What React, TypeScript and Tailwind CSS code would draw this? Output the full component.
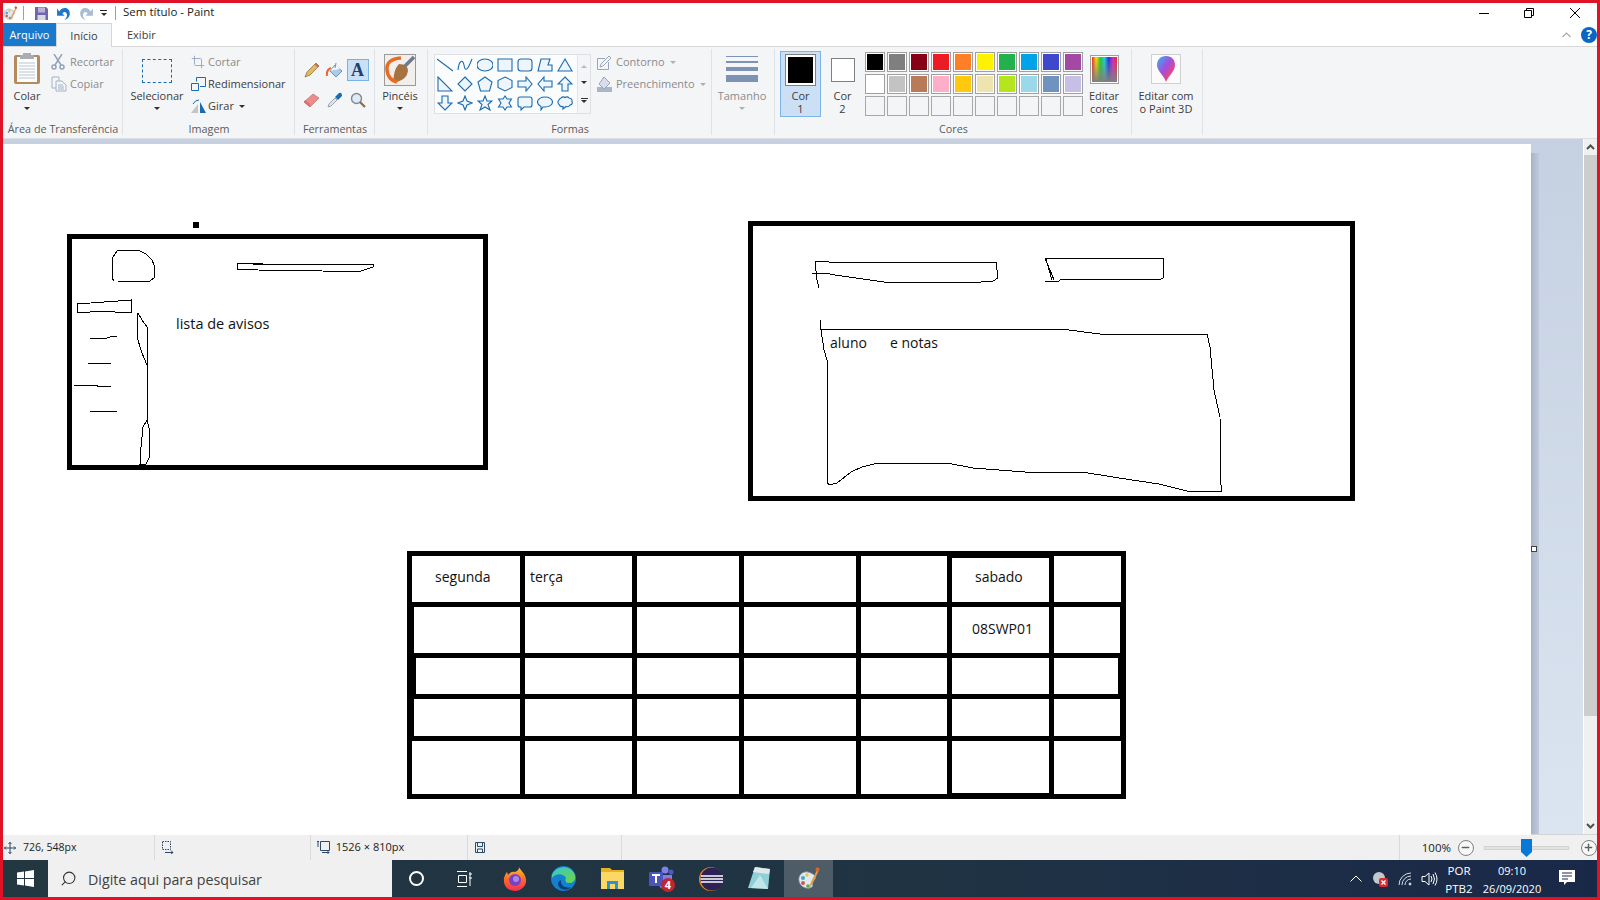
import { Crop, Minus, Plus, Search } from "lucide-react"
import type { ReactNode } from "react"

const row1 = ["#000000", "#7f7f7f", "#880015", "#ed1c24", "#ff7f27", "#fff200", "#22b14c", "#00a2e8", "#3f48cc", "#a349a4"]
const row2 = ["#ffffff", "#c3c3c3", "#b97a57", "#ffaec9", "#ffc90e", "#efe4b0", "#b5e61d", "#99d9ea", "#7092be", "#c8bfe7"]

const shapes = [
    "M0 2 L16 14",
    "M1 13 C2 3 6 2 7 8 S10 15 15 2",
    "M8 2 C13 2 16 5 16 8 S13 14 8 14 S0 11 0 8 S3 2 8 2Z",
    "M1 2 H15 V14 H1Z",
    "M4 2 H12 Q15 2 15 5 V11 Q15 14 12 14 H4 Q1 14 1 11 V5 Q1 2 4 2Z",
    "M1 14 L4 2 H13 L11 8 H15 V14Z",
    "M8 2 L15 14 H1Z",
    "M1 1 V15 H15Z",
    "M8 1 L15 8 L8 15 L1 8Z",
    "M8 1 L15 6 L12.5 15 H3.5 L1 6Z",
    "M8 1 L15 4.5 V11.5 L8 15 L1 11.5 V4.5Z",
    "M1 5 H9 V1 L15 8 L9 15 V11 H1Z",
    "M15 5 H7 V1 L1 8 L7 15 V11 H15Z",
    "M8 1 L15 8 H11 V15 H5 V8 H1Z",
    "M8 15 L15 8 H11 V1 H5 V8 H1Z",
    "M8 1 L10 6 L15 8 L10 10 L8 15 L6 10 L1 8 L6 6Z",
    "M8 1 L10 6 H15 L11 9.5 L13 15 L8 12 L3 15 L5 9.5 L1 6 H6Z",
    "M8 1 L10 4 H14.5 L12 8 L14.5 12 H10 L8 15 L6 12 H1.5 L4 8 L1.5 4 H6Z",
    "M3 2 H13 Q15 2 15 4 V10 Q15 12 13 12 H7 L4 15 V12 H3 Q1 12 1 10 V4 Q1 2 3 2Z",
    "M8 2 C12 2 15.5 4 15.5 7 S12 12 8 12 L6 12 L4 15 L4 11.5 C2 10.5 .5 9 .5 7 C.5 4 4 2 8 2Z",
    "M4 3 Q6 1 8 2.5 Q10.5 1 12 3 Q15.5 3.5 15 6.5 Q16 9.5 13 10 Q11.5 12.5 9 11.5 L6 14 L6 11.5 Q3 12 2.500 10 Q0 8 1.500 5.500 Q2.500 3.500 4 3Z",
]

const tableRows = [
    [
        { text: "segunda", className: "pl-[23px] pb-[5px]" },
        { text: "terça", className: "pl-[5px] pb-[5px]" },
        {}, {}, {},
        { text: "sabado", className: "pl-[23px] pb-[7px] mt-[2px]" },
        {},
    ],
    [{ className: "ml-[2px]" }, {}, {}, {}, {}, { text: "08SWP01", className: "pl-[20px] pb-[3px]" }, { className: "mr-[1px]" }],
    [{ className: "ml-[4px]" }, {}, {}, {}, {}, {}, { className: "mr-[3px]" }],
    [{ className: "ml-[2px]" }, {}, {}, {}, {}, {}, { className: "mr-[1px]" }],
    [{}, {}, {}, {}, {}, { className: "mb-[1px]" }, {}],
] as { text?: string; className?: string }[][]

function Caret({ gray }: { gray?: boolean }) {
    return <span className={`inline-block w-0 h-0 border-x-[3px] border-x-transparent border-t-[3px] ${gray ? "border-t-[#b0b0b0]" : "border-t-[#303030]"}`} />
}

function Group({ w, label, children }: { w: string; label: string; children: ReactNode }) {
    return (
        <div className={`${w} shrink-0 flex flex-col relative`}>
            <div className="h-[73px] flex">{children}</div>
            <div className="h-[18px] flex items-center justify-center text-[10.8px] text-[#5c5c5c] whitespace-nowrap">{label}</div>
            <div className="absolute right-0 top-[2px] bottom-[3px] w-px bg-[#dfe2e6]" />
        </div>
    )
}

function BigButton({ w, icon, lines, caret, gray }: { w: string; icon: ReactNode; lines: string[]; caret?: boolean; gray?: boolean }) {
    return (
        <div className={`${w} shrink-0 flex flex-col items-center`}>
            <div className="h-[42px] flex items-center justify-center">{icon}</div>
            <div className={`text-[11px] leading-[13px] text-center whitespace-nowrap ${gray ? "text-[#8b8b8b]" : "text-[#3c3c3c]"}`}>
                {lines.map((l) => <div key={l}>{l}</div>)}
            </div>
            {caret && <div className="h-[12px] flex items-center"><Caret gray={gray} /></div>}
        </div>
    )
}

function SmallRow({ box, icon, text, gray, caret }: { box: string; icon: ReactNode; text: string; gray?: boolean; caret?: "dark" | "gray" }) {
    return (
        <div className={`h-[22px] flex items-center text-[11px] whitespace-nowrap ${gray ? "text-[#8b8b8b]" : "text-[#3c3c3c]"}`}>
            <div className={`${box} shrink-0 flex items-center`}>{icon}</div>
            {text}
            {caret && <span className="ml-[5px] flex"><Caret gray={caret === "gray"} /></span>}
        </div>
    )
}

function PaintIcon({ size }: { size: number }) {
    return (
        <svg width={size} height={size} viewBox="0 0 24 24">
            <path d="M11 5 C5 4 1 9 2 14 C3 20 10 23 15 20 C17 18 14 16 16 14 C19 12 21 8 11 5Z" fill="#dfe9ee" stroke="#7b95a3" strokeWidth=".8" />
            <circle cx="6" cy="11" r="2" fill="#4f9fd8" />
            <circle cx="10" cy="8" r="1.7" fill="#f0c330" />
            <circle cx="6" cy="16" r="2" fill="#d9534f" />
            <circle cx="11" cy="19" r="1.8" fill="#5aa84f" />
            <path d="M21 1 L14 15 L11 23 L16 16 L22 3Z" fill="#e49a4a" />
            <path d="M20 0 L23 2 L21 5 L18 3Z" fill="#d8632c" />
        </svg>
    )
}

function Shape({ d }: { d: string }) {
    return (
        <svg width="16" height="16" viewBox="0 0 16 16">
            <path d={d} fill={d.startsWith("M0 2") || d.startsWith("M1 13") ? "none" : "#eef5fb"} stroke="#1b6bb0" strokeWidth="1.1" />
        </svg>
    )
}

function TitleBar() {
    return (
        <div className="h-[20px] bg-white flex items-center text-[11.5px] text-[#222]">
            <div className="w-[15px]"><PaintIcon size={15} /></div>
            <div className="ml-[5px] w-px h-[14px] bg-[#a0a0a0]" />
            <svg className="ml-[10px]" width="15" height="15" viewBox="0 0 15 15">
                <path d="M1 1 H12 L14 3 V14 H1Z" fill="#6f66ad" />
                <rect x="4" y="1.5" width="7" height="5" fill="#b9b4d8" />
                <rect x="3.5" y="9" width="8" height="5" fill="#d8d8e0" />
            </svg>
            <svg className="ml-[7px]" width="16" height="16" viewBox="0 0 15 15">
                <path d="M3 6 C6 1 13 2 13 8 C13 11 11 13 8 14 C10 12 11 10 10 8 C9 6 7 6 6 8 L8 10 H1 V3Z" fill="#1e78c8" />
            </svg>
            <svg className="ml-[6px]" width="16" height="16" viewBox="0 0 15 15">
                <path d="M12 6 C9 1 2 2 2 8 C2 11 4 13 7 14 C5 12 4 10 5 8 C6 6 8 6 9 8 L7 10 H14 V3Z" fill="#a9bcd3" />
            </svg>
            <div className="ml-[6px] flex flex-col items-center gap-[2px]">
                <div className="w-[7px] h-px bg-[#222]" />
                <Caret />
            </div>
            <div className="ml-[8px] w-px h-[14px] bg-[#a0a0a0]" />
            <span className="ml-[7px] mb-[2px]">Sem título - Paint</span>
            <div className="ml-auto flex items-center">
                <div className="w-[10px] h-px bg-black" />
                <svg className="ml-[35px]" width="10" height="10" viewBox="0 0 10 10" fill="none" stroke="#000">
                    <path d="M.5 2.5 H7.5 V9.5 H.5Z M2.5 2.5 V.5 H9.5 V7.5 H7.5" />
                </svg>
                <svg className="ml-[36px] mr-[17px]" width="10" height="10" viewBox="0 0 10 10" stroke="#000">
                    <path d="M0 0 L10 10 M10 0 L0 10" />
                </svg>
            </div>
        </div>
    )
}

function Tabs() {
    return (
        <div className="h-[24px] bg-white flex border-b border-[#d6d6d6] text-[11px]">
            <div className="w-[53px] pt-px bg-[#1979ca] text-white flex items-center justify-center">Arquivo</div>
            <div className="w-[56px] h-[24px] pt-px bg-[#f5f6f7] border-x border-t border-[#d6d6d6] flex items-center justify-center text-[#3c3c3c]">Início</div>
            <span className="ml-[15px] pt-px self-center text-[#3c3c3c]">Exibir</span>
            <div className="ml-auto flex items-center">
                <svg width="9" height="6" viewBox="0 0 9 6" fill="none" stroke="#a8a8a8" strokeWidth="1.2"><path d="M.5 5 L4.5 1 L8.5 5" /></svg>
                <div className="ml-[10px] w-[16px] h-[16px] rounded-full bg-[#0b66c3] text-white text-[12px] font-bold flex items-center justify-center">?</div>
            </div>
        </div>
    )
}

function Ribbon() {
    return (
        <div className="h-[92px] bg-[#f4f5f7] border-b border-[#dcdfe4] flex">
            <Group w="w-[120px]" label="Área de Transferência">
                <BigButton
                    w="w-[48px]"
                    caret
                    lines={["Colar"]}
                    icon={
                        <svg width="26" height="32" viewBox="0 0 26 32">
                            <rect x="0" y="3" width="26" height="29" rx="2" fill="#b58a5c" />
                            <rect x="3" y="5" width="20" height="25" fill="#fdfdfd" />
                            <path d="M5 11 H21 M5 14 H21 M5 17 H21 M5 20 H21 M5 23 H21 M5 26 H21" stroke="#b9c5d4" />
                            <path d="M9 1 H17 V3 H20 V7 H6 V3 H9Z" fill="#a9adb3" />
                        </svg>
                    }
                />
                <div className="pt-[4px]">
                    <SmallRow box="w-[19px]" gray text="Recortar" icon={
                        <svg width="14" height="16" viewBox="0 0 14 16" fill="none" stroke="#92a2bb" strokeWidth="1.5">
                            <path d="M3 0 L10 11 M11 0 L4 11" /><circle cx="3" cy="13" r="2" /><circle cx="11" cy="13" r="2" />
                        </svg>
                    } />
                    <SmallRow box="w-[19px]" gray text="Copiar" icon={
                        <svg width="16" height="16" viewBox="0 0 16 16" fill="#f4f5f7" stroke="#a5b2c6">
                            <path d="M1 1 H8 V12 H1Z" /><path d="M5 5 H11 L15 9 V15 H5Z" /><path d="M7 9 H12 M7 11 H13 M7 13 H13" />
                        </svg>
                    } />
                </div>
            </Group>
            <Group w="w-[172px]" label="Imagem">
                <BigButton
                    w="w-[68px]"
                    caret
                    lines={["Selecionar"]}
                    icon={<div className="w-[30px] h-[24px] mt-[6px] border border-dashed border-[#1b6bb0]" />}
                />
                <div className="pt-[4px]">
                    <SmallRow box="w-[17px]" gray text="Cortar" icon={<Crop size={14} color="#92a2bb" strokeWidth={1.5} />} />
                    <SmallRow box="w-[17px]" text="Redimensionar" icon={
                        <svg width="15" height="14" viewBox="0 0 15 14" fill="none" stroke="#1b6bb0">
                            <path d="M5.5 4.5 V.5 H14.5 V9.5 H9" /><path d="M.5 6.5 H7.5 V13.5 H.5Z" />
                        </svg>
                    } />
                    <SmallRow box="w-[17px]" caret="dark" text="Girar" icon={
                        <svg width="15" height="15" viewBox="0 0 15 15">
                            <path d="M7 5 V14 H0Z" fill="#c2c6cc" /><path d="M9 3 V14 H15Z" fill="#1b6bb0" /><path d="M2 5 Q4 1 8 1" fill="none" stroke="#1b6bb0" />
                        </svg>
                    } />
                </div>
            </Group>
            <Group w="w-[80px]" label="Ferramentas">
                <div className="pl-[5px] pt-[8px] grid grid-cols-[23px_23px_23px] grid-rows-[30px_30px]">
                    <div className="flex items-center justify-center">
                        <svg width="16" height="16" viewBox="0 0 16 16"><path d="M1 15 L3 10 L12 1 L15 4 L6 13Z" fill="#e5b95c" stroke="#7d6a3c" strokeWidth=".7" /><path d="M12 1 L15 4 L13.5 5.5 L10.5 2.5Z" fill="#d9695f" /></svg>
                    </div>
                    <div className="flex items-center justify-center">
                        <svg width="17" height="17" viewBox="0 0 17 17">
                            <path d="M9 3 L16 9 L10 15 L4 9Z" fill="#a8cdea" stroke="#6e8fb0" />
                            <path d="M4 9 L10 3 L14 7 L8 8Z" fill="#f4f8fb" />
                            <path d="M10 1 L9 6" stroke="#6e8fb0" />
                            <path d="M5 6 Q0 8 1 14" fill="none" stroke="#e8662a" strokeWidth="2" />
                        </svg>
                    </div>
                    <div className="flex items-center justify-center">
                        <div className="w-[22px] h-[22px] bg-[#c9e0f7] border border-[#7ab2e8] flex items-center justify-center text-[18px] font-bold text-[#1f3f6e] [font-family:'Liberation_Serif',serif]">A</div>
                    </div>
                    <div className="flex items-center justify-center">
                        <svg width="17" height="15" viewBox="0 0 17 15"><path d="M1 9 L10 1 L16 5 L7 14Z" fill="#ec8d8d" stroke="#c56a6a" strokeWidth=".7" /><path d="M1 9 L7 14 L7 11 L2 7Z" fill="#d86d6d" /></svg>
                    </div>
                    <div className="flex items-center justify-center">
                        <svg width="16" height="16" viewBox="0 0 16 16"><path d="M1 15 L2 12 L8 6 L10 8 L4 14Z" fill="#dfe7ee" stroke="#7b8794" strokeWidth=".7" /><path d="M8 5 L12 1 Q15 0 15 4 L11 8Z" fill="#1b6bb0" /></svg>
                    </div>
                    <div className="flex items-center justify-center">
                        <svg width="16" height="16" viewBox="0 0 16 16"><circle cx="6.5" cy="6.5" r="5" fill="#dfeaf4" stroke="#7e8a96" strokeWidth="1.4" /><path d="M10 10 L15 15" stroke="#8c6b45" strokeWidth="2.2" /></svg>
                    </div>
                </div>
            </Group>
            <Group w="w-[53px]" label="">
                <BigButton
                    w="w-[50px]"
                    caret
                    lines={["Pincéis"]}
                    icon={
                        <svg className="mt-[4px]" width="32" height="32" viewBox="0 0 32 32">
                            <rect x=".5" y=".5" width="31" height="31" fill="#f1efec" stroke="#9a9a9a" />
                            <path d="M30 3 L19 14" stroke="#6d7c8c" strokeWidth="3.5" />
                            <path d="M15 10 Q24 10 24 17 Q23 25 13 28 Q8 28 10 21 Q11 14 15 10Z" fill="#a6723f" />
                            <path d="M17 4 Q2 5 3 16 Q4 26 13 28" fill="none" stroke="#ea6a1f" strokeWidth="3.5" />
                        </svg>
                    }
                />
            </Group>
            <Group w="w-[284px]" label="Formas">
                <div className="ml-[6px] mt-[7px] h-[60px] w-[157px] flex border border-[#dcdfe3]">
                    <div className="w-[142px] pr-[2px] bg-[#fbfcfd] grid grid-cols-7 grid-rows-3 place-items-center">
                        {shapes.map((d) => <Shape key={d} d={d} />)}
                    </div>
                    <div className="flex-1 border-l border-[#e2e4e8] flex flex-col items-center justify-around py-[3px]">
                        <span className="w-0 h-0 border-x-[3px] border-x-transparent border-b-[3px] border-b-[#b5bcc6]" />
                        <Caret />
                        <div className="flex flex-col items-center gap-[1px]"><div className="w-[7px] h-px bg-[#303030]" /><Caret /></div>
                    </div>
                </div>
                <div className="pl-[6px] pt-[4px]">
                    <SmallRow box="w-[19px]" gray caret="gray" text="Contorno" icon={
                        <svg width="15" height="15" viewBox="0 0 15 15" fill="none" stroke="#9aa7bb"><path d="M.5 3.5 H8 M.5 3.5 V14.5 H11.5 V7" /><path d="M3 12 L4 9 L12 1 L14 3 L6 11Z" fill="#f4f5f7" /></svg>
                    } />
                    <SmallRow box="w-[19px]" gray caret="gray" text="Preenchimento" icon={
                        <svg width="15" height="16" viewBox="0 0 15 16"><rect x="0" y="11" width="15" height="5" fill="#a9b6c8" /><path d="M7 1 L13 7 L7 13 L2 8Z" fill="#d5deea" stroke="#9aa7bb" /></svg>
                    } />
                </div>
            </Group>
            <Group w="w-[63px]" label="">
                <BigButton
                    w="w-[60px]"
                    caret
                    gray
                    lines={["Tamanho"]}
                    icon={
                        <div className="w-[32px] flex flex-col gap-[4px] mt-[2px]">
                            <div className="h-px bg-[#7e92b4]" />
                            <div className="h-[2px] bg-[#7e92b4]" />
                            <div className="h-[4px] bg-[#7e92b4]" />
                            <div className="h-[7px] bg-[#7e92b4]" />
                        </div>
                    }
                />
            </Group>
            <Group w="w-[357px]" label="Cores">
                <div className="ml-[5px] mt-[4px] w-[41px] h-[66px] bg-[#cbdff5] border border-[#7eb4ea] flex flex-col items-center pt-[2px]">
                    <div className="w-[31px] h-[32px] border border-[#808080] p-[2px] bg-white"><div className="w-full h-full bg-black" /></div>
                    <div className="mt-[3px] text-[11px] leading-[13px] text-center text-[#3c3c3c]">Cor<br />1</div>
                </div>
                <div className="ml-px mt-[4px] w-[41px] flex flex-col items-center pt-[7px]">
                    <div className="w-[24px] h-[24px] border border-[#808080] bg-white" />
                    <div className="mt-[7px] text-[11px] leading-[13px] text-center text-[#3c3c3c]">Cor<br />2</div>
                </div>
                <div className="ml-[2px] mt-[5px] grid grid-cols-[repeat(10,20px)] grid-rows-[repeat(3,20px)] gap-x-[2px] gap-y-[2px] h-[64px]">
                    {row1.map((c) => (
                        <div key={c} className="border border-[#a0a0a0] p-px bg-white"><div className="w-full h-full" style={{ backgroundColor: c }} /></div>
                    ))}
                    {row2.map((c) => (
                        <div key={c} className="border border-[#a0a0a0] p-px bg-white"><div className="w-full h-full" style={{ backgroundColor: c }} /></div>
                    ))}
                    {row1.map((c) => <div key={c} className="border border-[#a8a8a8] bg-[#f4f5f7]" />)}
                </div>
                <BigButton
                    w="w-[42px]"
                    lines={["Editar", "cores"]}
                    icon={
                        <div className="w-[29px] h-[29px] border border-[#a0a0a0] p-px bg-white mt-[2px]">
                            <div className="relative w-full h-full bg-[linear-gradient(to_right,#ff2020,#ffe000,#20d020,#20d0e0,#2030e0,#e020d0,#ff2020)]">
                                <div className="absolute inset-0 bg-[linear-gradient(to_bottom,transparent,#808080)]" />
                            </div>
                        </div>
                    }
                />
            </Group>
            <Group w="w-[71px]" label="">
                <BigButton
                    w="w-[68px]"
                    lines={["Editar com", "o Paint 3D"]}
                    icon={
                        <div className="w-[30px] h-[30px] border border-[#d0d0d0] bg-[#fbfbfb] flex items-center justify-center mt-[2px]">
                            <svg width="18" height="26" viewBox="0 0 18 26">
                                <defs>
                                    <linearGradient id="p3d" x1="0" y1="0" x2="1" y2="1">
                                        <stop offset="0" stopColor="#35b6ea" />
                                        <stop offset=".45" stopColor="#a04fe0" />
                                        <stop offset=".75" stopColor="#f0457a" />
                                        <stop offset="1" stopColor="#f7a21c" />
                                    </linearGradient>
                                </defs>
                                <path d="M9 0 C15 0 18 4 18 9 C18 15 12 19 9 26 C7 19 0 15 0 9 C0 4 3 0 9 0Z" fill="url(#p3d)" />
                            </svg>
                        </div>
                    }
                />
            </Group>
        </div>
    )
}

function Sketches() {
    const lines = [
        "118,281 150,281 154,278 154,265 152,260 146,254 138,250 121,250 117,251 113,257 112,260 112,278 114,281",
        "237,263 263,264 373,264 373,267 358,272 322,271 258,270 237,269 237,263",
        "243,263 263,265",
        "77,304 118,301 131,300 131,312 115,312 100,311 80,313 77,312 77,304",
        "138,313 137,316 137,337 142,353 147,365 147,420 143,427 141,447 140,464 146,464 149,458 149,428 147,420",
        "138,313 142,320 147,327 147,365",
        "90,338 107,338 110,337 117,336",
        "88,363 111,363",
        "74,385 97,385 97,386 111,386",
        "90,411 117,411",
        "812,273 825,273 835,275 870,280 884,282 981,282 993,281 998,278 996,262 829,262 826,261 815,261 817,280 819,288",
        "1045,258 1163,258 1163,278 1161,279 1061,279 1059,281 1045,281",
        "1045,258 1050,270 1054,280",
        "1046,259 1052,280",
        "820,320 820,329 1061,329 1100,334 1207,334 1210,347 1214,390 1220,417 1221,485 1221,491 1187,491 1159,484 1119,478 1082,472 1025,472 973,468 947,463 878,463 862,467 851,472 837,483 829,485 827,482 827,360 824,350 821,330",
    ]
    return (
        <svg className="absolute left-0 top-0" width="1528" height="691" viewBox="3 144 1528 691" fill="none" stroke="#000" strokeWidth="1" shapeRendering="crispEdges">
            {lines.map((p) => <polyline key={p} points={p} />)}
        </svg>
    )
}

function Paper() {
    return (
        <div className="relative w-[1528px] h-[691px] mt-[5px] bg-white overflow-hidden text-[14px] text-[#111]">
            <div className="absolute left-[190px] top-[78px] w-[6px] h-[6px] bg-black" />
            <div className="absolute left-[64px] top-[90px] w-[421px] h-[236px] border-[5px] border-black" />
            <div className="absolute left-[745px] top-[77px] w-[607px] h-[280px] border-[5px] border-black" />
            <Sketches />
            <span className="absolute left-[173px] top-[169px] text-[14.5px]">lista de avisos</span>
            <span className="absolute left-[827px] top-[188px]">aluno</span>
            <span className="absolute left-[887px] top-[188px]">e notas</span>
            <div className="absolute left-[404px] top-[407px] w-[719px] h-[248px] bg-black p-[5px] grid grid-cols-[108px_107px_102px_112px_86px_97px_67px] grid-rows-[46px_46px_36px_37px_53px] gap-[5px]">
                {tableRows.flat().map((c, i) => (
                    <div key={i} className={`bg-white flex items-center ${c.className ?? ""}`}>{c.text}</div>
                ))}
            </div>
        </div>
    )
}

function Workspace() {
    return (
        <div className="flex-1 min-h-0 flex">
            <div className="relative flex-1 flex bg-[linear-gradient(to_bottom,#c5d0e1,#dbe5f1)]">
                <Paper />
                <div className="w-[8px] mt-[14px] bg-[linear-gradient(to_right,#a6b3c8,#c0cadb)]" />
                <div className="absolute left-[1528px] top-[407px] w-[6px] h-[6px] bg-white border border-[#404040]" />
            </div>
            <div className="w-[14px] border-l border-white bg-[#f0f0f0] flex flex-col">
                <div className="h-[16px] flex items-center justify-center">
                    <svg width="9" height="6" viewBox="0 0 9 6" fill="none" stroke="#505050" strokeWidth="2"><path d="M1 5 L4.5 1.5 L8 5" /></svg>
                </div>
                <div className="h-[561px] bg-[#cdcdcd]" />
                <div className="mt-auto h-[16px] flex items-center justify-center">
                    <svg width="9" height="6" viewBox="0 0 9 6" fill="none" stroke="#505050" strokeWidth="2"><path d="M1 1 L4.5 4.5 L8 1" /></svg>
                </div>
            </div>
        </div>
    )
}

function StatusBar() {
    return (
        <div className="h-[26px] bg-[#f0f0f0] border-t border-[#d4d4d4] flex text-[11px] text-[#222]">
            <div className="w-[152px] border-r border-[#dadada] flex items-center pl-px">
                <svg width="12" height="12" viewBox="0 0 12 12" fill="none" stroke="#2d4a6b"><path d="M6 0 V12 M0 6 H12 M4.5 2 L6 .5 L7.5 2 M4.5 10 L6 11.5 L7.5 10 M2 4.5 L.5 6 L2 7.5 M10 4.5 L11.5 6 L10 7.5" /></svg>
                <span className="ml-[7px] text-[10.5px]">726, 548px</span>
            </div>
            <div className="w-[156px] border-r border-[#dadada] flex items-center pl-[5px]">
                <svg width="14" height="13" viewBox="0 0 14 13" fill="none" stroke="#2d4a6b"><path d="M2.5 .5 H10.5 V8.5 H2.5Z" strokeDasharray="1.5 1" /><path d="M5 11.5 H13 M11 9.5 L13 11.5 L11 13" /></svg>
            </div>
            <div className="w-[157px] border-r border-[#dadada] flex items-center pl-[6px]">
                <svg width="14" height="13" viewBox="0 0 14 13" fill="none" stroke="#2d4a6b"><path d="M3.5 .5 H12.5 V9.5 H3.5Z" /><path d="M1 0 V6 M0 1 L1 0 L2 1 M5 11.5 H12 M10.5 10 L12 11.5 L10.5 13" /></svg>
                <span className="ml-[5px]">1526 × 810px</span>
            </div>
            <div className="w-[155px] border-r border-[#dadada] flex items-center pl-[7px]">
                <svg width="10" height="11" viewBox="0 0 10 11" fill="none" stroke="#2d4a6b"><path d="M.5 .5 H9.5 V10.5 H.5Z M2.5 .5 V4.5 H7.5 V.5 M2.5 10.5 V7 H7.5 V10.5" /></svg>
            </div>
            <div className="w-[778px] border-r border-[#dadada]" />
            <div className="flex-1 flex items-center pl-[22px]">
                <span className="text-[11.5px]">100%</span>
                <div className="ml-[7px] w-[16px] h-[16px] rounded-full border border-[#808080] bg-[#f8f8f8] flex items-center justify-center"><Minus size={11} color="#606060" strokeWidth={3} /></div>
                <div className="relative ml-[10px] w-[85px] h-[4px] bg-[#e2e2e2] border border-[#d2d2d2]">
                    <svg className="absolute left-[36px] top-[-8px]" width="11" height="18" viewBox="0 0 11 18"><path d="M0 0 H11 V13 L5.5 18 L0 13Z" fill="#0a78d7" /></svg>
                </div>
                <div className="ml-[12px] w-[16px] h-[16px] rounded-full border border-[#808080] bg-[#f8f8f8] flex items-center justify-center"><Plus size={11} color="#606060" strokeWidth={3} /></div>
            </div>
        </div>
    )
}

function TaskIcon({ w, active, children }: { w: string; active?: boolean; children: ReactNode }) {
    return <div className={`${w} h-full shrink-0 flex items-center justify-center ${active ? "bg-[#4d5c66]" : ""}`}>{children}</div>
}

function Taskbar() {
    return (
        <div className="h-[37px] flex items-stretch bg-[linear-gradient(to_right,#22373f,#1f3344_60%,#1a2848)] text-white">
            <TaskIcon w="w-[45px]">
                <svg width="17" height="17" viewBox="0 0 17 17" fill="#fff"><path d="M0 2.5 L7 1.5 V8 H0Z M8 1.4 L17 0 V8 H8Z M0 9 H7 V15.5 L0 14.5Z M8 9 H17 V17 L8 15.6Z" /></svg>
            </TaskIcon>
            <div className="w-[344px] shrink-0 bg-[#f0f0f0] flex items-center pl-[12px] text-[14.25px] text-[#404040]">
                <Search size={17} color="#333" strokeWidth={1.5} className="-scale-x-100" />
                <span className="ml-[11px] mt-[2px]">Digite aqui para pesquisar</span>
            </div>
            <TaskIcon w="w-[48px]"><div className="w-[15px] h-[15px] rounded-full border-2 border-white" /></TaskIcon>
            <TaskIcon w="w-[48px]">
                <svg width="16" height="16" viewBox="0 0 16 16" fill="none" stroke="#fff"><path d="M1 .5 H11 M1 15.5 H11 M2.5 4.5 H10.5 V11.5 H2.5Z M14 1 V15" /><path d="M13 3 H16 M13 7 H16" /></svg>
            </TaskIcon>
            <div className="w-[2px] shrink-0" />
            <TaskIcon w="w-[49px]">
                <svg width="24" height="24" viewBox="0 0 24 24">
                    <defs><linearGradient id="ff" x1="0" y1="0" x2="0" y2="1"><stop offset="0" stopColor="#ffc423" /><stop offset=".5" stopColor="#ff6a2b" /><stop offset="1" stopColor="#f5304f" /></linearGradient></defs>
                    <path d="M16 0 C17 3 22 6 23 12 C24 19 18 24 12 24 C5 24 0 19 1 11 C2 8 3 6 4 5 L5 8 C7 5 10 4 12 5 C15 4 16 2 16 0Z" fill="url(#ff)" />
                    <circle cx="12" cy="13" r="6" fill="#7542c4" />
                    <circle cx="13" cy="12" r="3" fill="#b384e8" />
                </svg>
            </TaskIcon>
            <TaskIcon w="w-[49px]">
                <svg width="25" height="25" viewBox="0 0 25 25">
                    <defs><linearGradient id="ed" x1="0" y1="0" x2="1" y2="1"><stop offset="0" stopColor="#37c6d0" /><stop offset="1" stopColor="#6fd63e" /></linearGradient></defs>
                    <circle cx="12.5" cy="12.5" r="12.5" fill="#1281d1" />
                    <path d="M1 9 C4 0 18 -2 23 7 C26 13 23 17 18 17 C14 17 14 14 15 12 C12 7 5 7 1 12Z" fill="url(#ed)" />
                    <path d="M10 14 C9 19 14 23 20 21 C17 25 8 25 7 18 C7 16 8 15 10 14Z" fill="#073e7a" />
                </svg>
            </TaskIcon>
            <TaskIcon w="w-[49px]">
                <svg width="23" height="21" viewBox="0 0 23 21">
                    <path d="M0 0 H9 L11 2 H23 V21 H0Z" fill="#e8b21e" />
                    <rect x="0" y="4" width="23" height="17" fill="#fbd865" />
                    <path d="M6 13 H17 V21 H14 V16 H9 V21 H6Z" fill="#2a93d6" />
                </svg>
            </TaskIcon>
            <TaskIcon w="w-[49px]">
                <svg width="27" height="27" viewBox="0 0 27 27">
                    <circle cx="17" cy="5" r="3.5" fill="#7b83eb" /><circle cx="23" cy="7" r="2.5" fill="#5059c9" />
                    <path d="M11 10 H24 V19 Q24 24 17 24 Q11 24 11 19Z" fill="#7b83eb" />
                    <rect x="1" y="7" width="14" height="14" rx="1" fill="#4b53bc" />
                    <path d="M4 10 H12 M8 10 V18" stroke="#fff" strokeWidth="2" />
                    <circle cx="20" cy="20" r="7" fill="#c4242e" />
                    <text x="20" y="24" textAnchor="middle" fontSize="11" fontWeight="700" fill="#fff">4</text>
                </svg>
            </TaskIcon>
            <TaskIcon w="w-[49px]">
                <svg width="24" height="24" viewBox="0 0 24 24">
                    <circle cx="12" cy="12" r="12" fill="#e8832a" />
                    <circle cx="13" cy="12" r="11.5" fill="#2c2255" />
                    <path d="M2 9 H24 M1.500 12 H24.500 M2 15 H24" stroke="#fff" strokeWidth="1.5" />
                </svg>
            </TaskIcon>
            <TaskIcon w="w-[49px]">
                <svg width="23" height="25" viewBox="0 0 23 25">
                    <path d="M7 1 L22 3 L20 23 L0 22Z" fill="#8fd0d8" />
                    <path d="M7 1 L22 3 L21 8 L5 6Z" fill="#dfe8ea" />
                    <path d="M3 22 L20 23 L12 9Z" fill="#d6eef1" opacity=".7" />
                </svg>
            </TaskIcon>
            <TaskIcon w="w-[49px]" active><PaintIcon size={24} /></TaskIcon>
            <div className="ml-auto flex items-stretch">
                <TaskIcon w="w-[24px]">
                    <svg width="12" height="7" viewBox="0 0 12 7" fill="none" stroke="#fff"><path d="M.5 6.500 L6 1 L11.500 6.500" /></svg>
                </TaskIcon>
                <TaskIcon w="w-[24px]">
                    <svg width="17" height="16" viewBox="0 0 17 16"><circle cx="7" cy="7" r="6" fill="#c3c8cc" /><rect x="7" y="7" width="9" height="9" rx="2" fill="#d82c34" /><path d="M9.500 9.500 L13.500 13.500 M13.500 9.500 L9.500 13.500" stroke="#fff" strokeWidth="1.4" /></svg>
                </TaskIcon>
                <TaskIcon w="w-[25px]">
                    <svg width="14" height="14" viewBox="0 0 14 14" fill="none" stroke="#d8dde2"><path d="M1 13 A12 12 0 0 1 13 1 M4 13 A9 9 0 0 1 13 4 M7 13 A6 6 0 0 1 13 7" /><circle cx="12" cy="12" r="1" fill="#fff" /></svg>
                </TaskIcon>
                <TaskIcon w="w-[25px]">
                    <svg width="17" height="16" viewBox="0 0 17 16" fill="none" stroke="#fff"><path d="M1 5.500 H4 L8 2 V14 L4 10.500 H1Z" /><path d="M10 5 Q12 8 10 11 M12 3 Q15 8 12 13 M14 1.500 Q18 8 14 14.500" /></svg>
                </TaskIcon>
                <div className="w-[37px] pr-[3px] flex flex-col items-center justify-center pt-[2px] text-[11.5px] leading-[18px]"><span>POR</span><span>PTB2</span></div>
                <div className="w-[66px] flex flex-col items-center justify-center pt-[2px] text-[11px] leading-[18px]"><span>09:10</span><span>26/09/2020</span></div>
                <TaskIcon w="w-[45px]">
                    <svg width="17" height="17" viewBox="0 0 17 17"><path d="M0 0 H16 V12 H8 L5 15 V12 H0Z" fill="#fff" /><path d="M3 3 H13 M3 6 H13 M3 9 H9" stroke="#1a2848" /></svg>
                </TaskIcon>
                <div className="w-[7px]" />
            </div>
        </div>
    )
}

export default function App() {
    return (
        <div className="w-[1600px] h-[900px] bg-[#e01225] p-[3px] flex flex-col overflow-hidden [font-family:'Open_Sans','Noto_Sans',sans-serif]">
            <TitleBar />
            <Tabs />
            <Ribbon />
            <Workspace />
            <StatusBar />
            <Taskbar />
        </div>
    )
}
